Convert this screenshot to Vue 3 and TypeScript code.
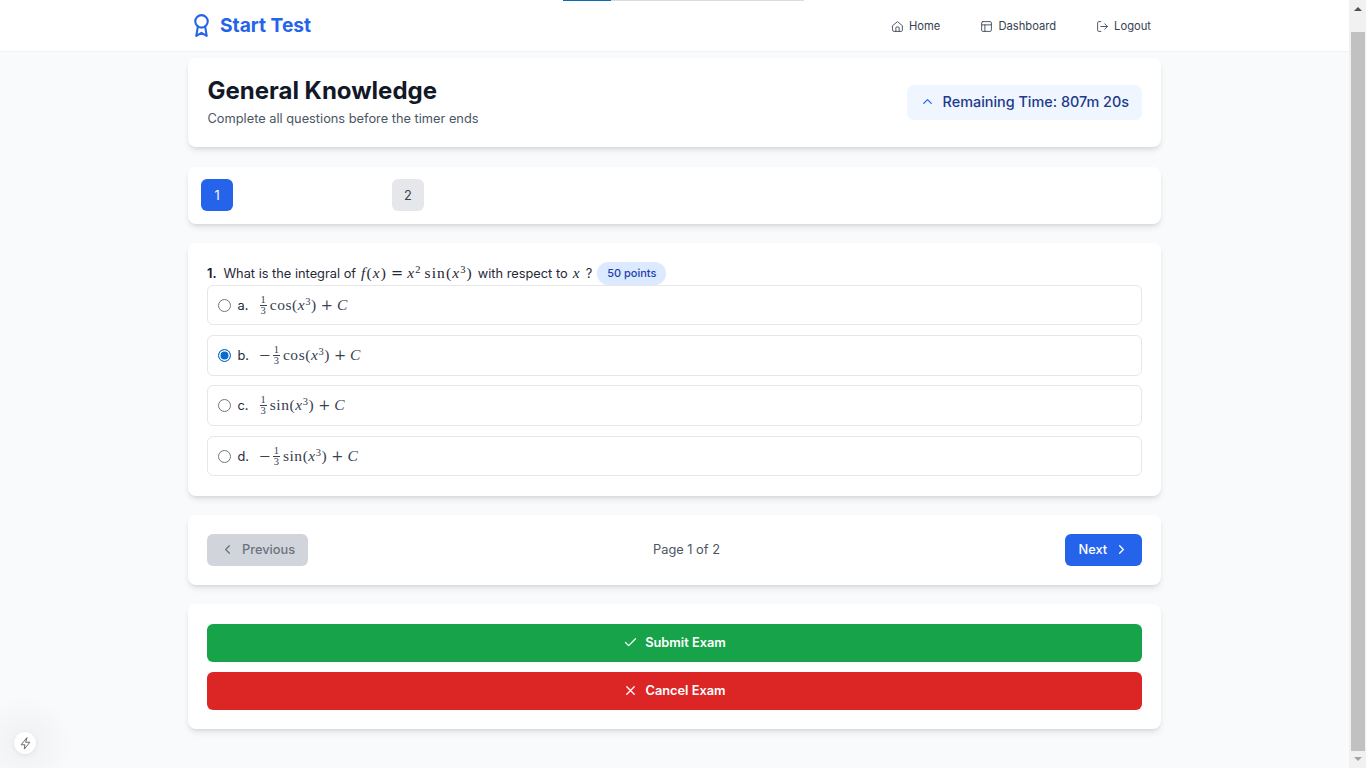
<script setup lang="ts">
interface Option { key: string; neg: boolean; fn: string; checked: boolean }
const options: Option[] = [
  { key: 'a.', neg: false, fn: 'cos', checked: false },
  { key: 'b.', neg: true, fn: 'cos', checked: true },
  { key: 'c.', neg: false, fn: 'sin', checked: false },
  { key: 'd.', neg: true, fn: 'sin', checked: false },
]
</script>

<template>
  <div class="app">
    <main class="page">
      <div class="strip"><i class="strip-a"></i><i class="strip-b"></i></div>
      <header class="topbar">
        <div class="topbar-inner">
          <div class="brand">
            <svg class="brand-icon" viewBox="0 0 24 24" fill="none" stroke="currentColor" stroke-width="2" stroke-linecap="round" stroke-linejoin="round"><circle cx="12" cy="8" r="6"/><path d="M15.477 12.89 17 22l-5-3-5 3 1.523-9.11"/></svg>
            <span>Start Test</span>
          </div>
          <nav class="nav">
            <a class="nav-item">
              <svg viewBox="0 0 24 24" fill="none" stroke="currentColor" stroke-width="1.6" stroke-linecap="round" stroke-linejoin="round"><path d="M3 10.5 12 3l9 7.5V19a2 2 0 0 1-2 2H5a2 2 0 0 1-2-2z"/><path d="M9 21v-7a1 1 0 0 1 1-1h4a1 1 0 0 1 1 1v7"/></svg>
              Home
            </a>
            <a class="nav-item">
              <svg viewBox="0 0 24 24" fill="none" stroke="currentColor" stroke-width="1.6" stroke-linecap="round" stroke-linejoin="round"><rect x="3" y="3" width="18" height="18" rx="2"/><path d="M3 9h18M9 21V9"/></svg>
              Dashboard
            </a>
            <a class="nav-item">
              <svg viewBox="0 0 24 24" fill="none" stroke="currentColor" stroke-width="1.6" stroke-linecap="round" stroke-linejoin="round"><path d="M9 21H5a2 2 0 0 1-2-2V5a2 2 0 0 1 2-2h4"/><path d="m16 17 5-5-5-5"/><path d="M21 12H9"/></svg>
              Logout
            </a>
          </nav>
        </div>
      </header>

      <div class="content">
        <section class="card head-card">
          <div>
            <h1>General Knowledge</h1>
            <p>Complete all questions before the timer ends</p>
          </div>
          <div class="timer">
            <svg viewBox="0 0 24 24" fill="none" stroke="currentColor" stroke-width="2" stroke-linecap="round" stroke-linejoin="round"><path d="m6 15 6-6 6 6"/></svg>
            <span>Remaining Time: 807m 20s</span>
          </div>
        </section>

        <section class="card tabs-card">
          <button class="tab active">1</button>
          <button class="tab">2</button>
        </section>

        <section class="card question-card">
          <div class="question">
            <strong>1.</strong>
            <span class="q-text">What is the integral of</span>
            <span class="math q-math"><i>f</i>(<i>x</i>)<span class="op">=</span><i>x</i><sup>2</sup><span class="fn">sin</span>(<i>x</i><sup>3</sup>)</span>
            <span class="q-text">with respect to</span>
            <span class="math q-math"><i>x</i></span>
            <span class="q-text">?</span>
            <span class="pill">50 points</span>
          </div>
          <div class="options">
            <label v-for="o in options" :key="o.key" class="option">
              <span class="radio" :class="{ on: o.checked }"></span>
              <span class="opt-key">{{ o.key }}</span>
              <span class="math opt-math">
                <span v-if="o.neg" class="minus">−</span>
                <span class="frac"><span>1</span><span class="den">3</span></span>
                <span>{{ o.fn }}(<i>x</i><sup>3</sup>)<span class="op plus">+</span><i>C</i></span>
              </span>
            </label>
          </div>
        </section>

        <section class="card pager-card">
          <button class="btn prev">
            <svg viewBox="0 0 24 24" fill="none" stroke="currentColor" stroke-width="2" stroke-linecap="round" stroke-linejoin="round"><path d="m15 18-6-6 6-6"/></svg>
            Previous
          </button>
          <span class="page-label">Page 1 of 2</span>
          <button class="btn next">
            Next
            <svg viewBox="0 0 24 24" fill="none" stroke="currentColor" stroke-width="2" stroke-linecap="round" stroke-linejoin="round"><path d="m9 18 6-6-6-6"/></svg>
          </button>
        </section>

        <section class="card actions-card">
          <button class="action submit">
            <svg viewBox="0 0 24 24" fill="none" stroke="currentColor" stroke-width="2" stroke-linecap="round" stroke-linejoin="round"><path d="M20 6 9 17l-5-5"/></svg>
            Submit Exam
          </button>
          <button class="action cancel">
            <svg viewBox="0 0 24 24" fill="none" stroke="currentColor" stroke-width="2" stroke-linecap="round" stroke-linejoin="round"><path d="M18 6 6 18M6 6l12 12"/></svg>
            Cancel Exam
          </button>
        </section>
      </div>

      <div class="glow"></div>
      <div class="bolt">
        <svg viewBox="0 0 24 24" fill="none" stroke="currentColor" stroke-width="1.6" stroke-linecap="round" stroke-linejoin="round"><path d="M14 3 5 14h6l-1 7 9-11h-6z"/></svg>
      </div>
    </main>

    <aside class="scrollbar" aria-hidden="true">
      <span class="arrow up"></span>
      <span class="thumb"></span>
      <span class="arrow down"></span>
    </aside>
  </div>
</template>

<style>
html, body { margin: 0; height: 100%; overflow: hidden; }
</style>

<style scoped>
* { box-sizing: border-box; }
.app {
  display: flex;
  height: 768px;
  overflow: hidden;
  font-family: Inter, "Liberation Sans", sans-serif;
  color: #111827;
}
.page {
  position: relative;
  flex: 1;
  min-width: 0;
  background: #f8fafb;
  overflow: hidden;
}
.strip { position: absolute; top: 0; left: 563px; display: flex; height: 1px; z-index: 2; }
.strip-a { width: 48px; background: #0b6bb5; }
.strip-b { width: 193px; background: #dcdcdc; }

.topbar {
  height: 52px;
  background: #fff;
  border-bottom: 1px solid #f1f3f5;
}
.topbar-inner {
  width: 973px;
  margin: 0 auto;
  height: 50px;
  display: flex;
  align-items: center;
  justify-content: space-between;
  padding: 0 10px 0 1px;
}
.brand {
  display: flex;
  align-items: center;
  gap: 6px;
  font-size: 19.2px;
  font-weight: 700;
  color: #2563eb;
}
.brand-icon { width: 25px; height: 25px; }
.nav { display: flex; gap: 40px; padding-top: 2px; }
.nav-item {
  display: flex;
  align-items: center;
  gap: 5px;
  font-size: 11.2px;
  font-weight: 400;
  color: #374151;
}
.nav-item svg { width: 13px; height: 13px; }

.content {
  width: 973px;
  margin: 6px auto 0;
  display: flex;
  flex-direction: column;
  gap: 19.2px;
}
.card {
  background: #fff;
  border-radius: 8px;
  box-shadow: 0 4px 6px -1px rgba(0, 0, 0, .1), 0 2px 4px -2px rgba(0, 0, 0, .1);
}
.head-card {
  height: 89.4px;
  padding: 0 19px 2px 19.5px;
  display: flex;
  align-items: center;
  justify-content: space-between;
}
h1 { margin: 0; font-size: 24px; line-height: 32px; font-weight: 700; color: #111827; }
.head-card p { margin: 3px 0 0; font-size: 12.8px; line-height: 18px; color: #4b5563; }
.timer {
  display: flex;
  align-items: center;
  gap: 8px;
  height: 35px;
  margin-top: 2px;
  padding: 0 13px 2px 13px;
  border-radius: 7px;
  background: #eff6ff;
  color: #1e3a8a;
  font-size: 14.4px;
  font-weight: 500;
}
.timer svg { width: 15px; height: 15px; color: #2563eb; }

.tabs-card {
  height: 57px;
  padding: 12.5px 13px;
  display: grid;
  grid-template-columns: repeat(5, 1fr);
  gap: 8px;
}
.tab {
  width: 32px;
  height: 32px;
  border: 0;
  border-radius: 6px;
  background: #e5e7eb;
  color: #374151;
  font: 400 12.8px Inter, sans-serif;
  padding: 0;
}
.tab.active { background: #2563eb; color: #fff; }

.question-card { padding: 19px 19px 0; height: 253px; }
.question {
  display: flex;
  align-items: center;
  gap: 5px;
  height: 22.9px;
  font-size: 12.8px;
  color: #1f2937;
}
.question strong { font-weight: 600; font-size: 12.8px; color: #111827; margin-right: 2px; }
.math {
  font-family: "Liberation Serif", "Times New Roman", serif;
  font-size: 15.5px;
  letter-spacing: .55px;
  color: #1f2937;
  white-space: pre;
}
.q-math { letter-spacing: 1.1px; }
.math sup { font-size: 10.5px; line-height: 0; vertical-align: 5px; }
.op { font-family: "DejaVu Serif", serif; font-size: 14.5px; letter-spacing: 0; margin: 0 4px; }
.fn { margin-left: 3px; }
.pill {
  height: 23px;
  padding: 0 10px;
  display: flex;
  align-items: center;
  border-radius: 12px;
  background: #dbeafe;
  color: #1e40af;
  font-size: 11px;
  font-weight: 500;
}
.options { display: flex; flex-direction: column; gap: 9.58px; }
.option {
  height: 40.75px;
  display: flex;
  align-items: center;
  padding: 0 9.5px;
  border: 1px solid #e5e7eb;
  border-radius: 6px;
  background: #fff;
}
.radio {
  width: 13px;
  height: 13px;
  border-radius: 50%;
  border: 1px solid #767676;
  background: #fff;
}
.radio.on {
  border: 1.5px solid #0b6bc9;
  background: #0b6bc9;
  box-shadow: inset 0 0 0 1.5px #fff;
}
.opt-key { margin-left: 7px; width: 22px; font-size: 12.8px; font-weight: 400; color: #1f2937; }
.opt-math { display: flex; align-items: center; gap: 2px; color: #374151; padding-bottom: 1px; }
.minus { font-family: "DejaVu Serif", serif; font-size: 14.5px; letter-spacing: 0; margin: 0 0 0 -1px; }
.frac {
  display: inline-flex;
  flex-direction: column;
  align-items: center;
  font-size: 10.5px;
  letter-spacing: 0;
  line-height: 10px;
  margin-right: 1px;
}
.frac .den { border-top: 1px solid #374151; line-height: 9px; padding: 0 1px; }

.pager-card {
  height: 70px;
  padding: 0 19px;
  display: flex;
  align-items: center;
  justify-content: space-between;
}
.btn {
  height: 32px;
  border: 0;
  border-radius: 6px;
  display: flex;
  align-items: center;
  font: 500 12.8px Inter, sans-serif;
}
.btn svg { width: 15px; height: 15px; }
.prev { width: 101px; gap: 7px; padding: 0 0 0 13px; background: #d1d5db; color: #6b7280; }
.next { width: 77px; gap: 7px; padding: 0 0 0 13.5px; background: #2563eb; color: #fff; }
.page-label { font-size: 12.8px; color: #4b5563; }

.actions-card {
  height: 125px;
  padding: 20px 19px;
  display: flex;
  flex-direction: column;
  gap: 10px;
}
.action {
  flex: none;
  height: 38px;
  border: 0;
  border-radius: 6px;
  padding: 0 0 1px;
  display: flex;
  align-items: center;
  justify-content: center;
  gap: 7px;
  color: #fff;
  font: 600 12.8px Inter, sans-serif;
}
.action svg { width: 15px; height: 15px; }
.submit { background: #16a34a; }
.cancel { background: #dc2626; }

.glow {
  position: absolute;
  left: -25px;
  bottom: -25px;
  width: 100px;
  height: 100px;
  border-radius: 50%;
  background: radial-gradient(circle, rgba(0, 0, 0, .04), rgba(0, 0, 0, 0) 68%);
}
.bolt {
  position: absolute;
  left: 14px;
  top: 732px;
  width: 22px;
  height: 22px;
  border-radius: 50%;
  background: #fff;
  box-shadow: 0 1px 4px rgba(0, 0, 0, .08);
  display: flex;
  align-items: center;
  justify-content: center;
  color: #6b6b6b;
}
.bolt svg { width: 15px; height: 15px; }

.scrollbar {
  position: relative;
  flex: 0 0 17px;
  background: #f1f1f1;
}
.thumb {
  position: absolute;
  left: 2px;
  right: 1px;
  top: 32px;
  height: 719px;
  background: #c1c1c1;
}
.arrow { position: absolute; left: 4.5px; width: 0; height: 0; border-left: 4px solid transparent; border-right: 4px solid transparent; }
.arrow.up { top: 7px; border-bottom: 4px solid #505050; }
.arrow.down { bottom: 7px; border-top: 4px solid #a3a3a3; }
</style>
